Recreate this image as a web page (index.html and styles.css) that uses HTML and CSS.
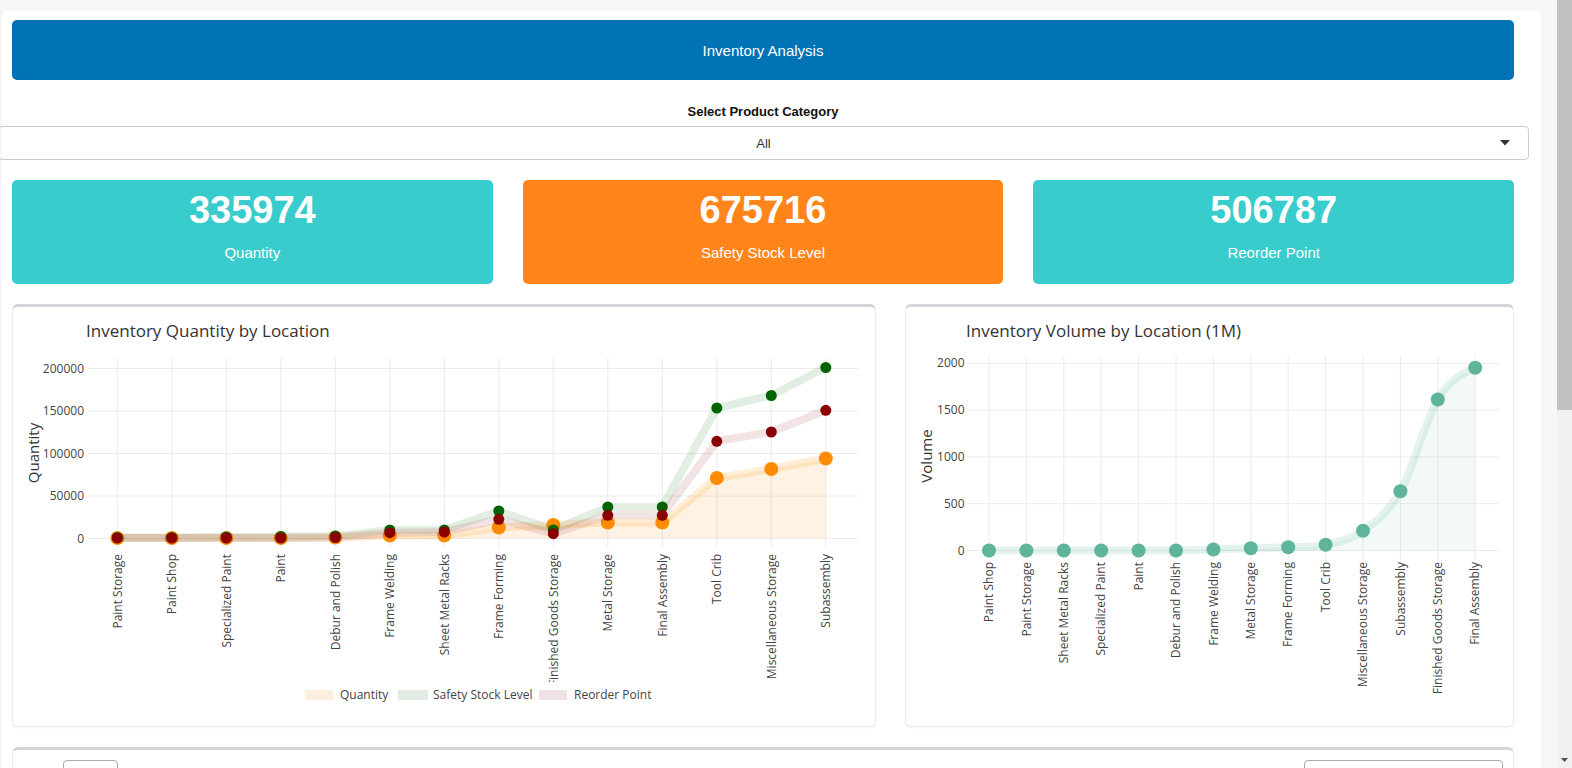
FILE: index.html
```html
<!DOCTYPE html>
<html lang="en">
<head>
<meta charset="utf-8">
<title>Inventory Analysis</title>
<link rel="stylesheet" href="styles.css">
</head>
<body>
<div class="viewport">
  <div class="page">
    <div class="app">
      <header class="banner">Inventory Analysis</header>

      <div class="filter">
        <div class="filter-label">Select Product Category</div>
        <div class="select">
          <span></span>
          <span class="select-value">All</span>
          <span class="caret"><svg width="10" height="6" viewBox="0 0 10 6"><path d="M0 0 H10 L5 5.5 Z" fill="#333"/></svg></span>
        </div>
      </div>

      <div class="kpis">
        <div class="kpi kpi-teal">
          <div class="kpi-value">335974</div>
          <div class="kpi-label">Quantity</div>
        </div>
        <div class="kpi kpi-orange">
          <div class="kpi-value">675716</div>
          <div class="kpi-label">Safety Stock Level</div>
        </div>
        <div class="kpi kpi-teal">
          <div class="kpi-value">506787</div>
          <div class="kpi-label">Reorder Point</div>
        </div>
      </div>

      <div class="charts">
        <div class="chart-card">
          <svg class="plot" width="862" height="419" viewBox="1 0 862 419">
            <text class="plot-title" x="74" y="30">Inventory Quantity by Location</text>
            <g class="grid">
              <line x1="76" x2="846" y1="231.5" y2="231.5"/>
              <line x1="76" x2="846" y1="189" y2="189"/>
              <line x1="76" x2="846" y1="146.5" y2="146.5"/>
              <line x1="76" x2="846" y1="104" y2="104"/>
              <line x1="76" x2="846" y1="61.5" y2="61.5"/>
              <line x1="105.3" x2="105.3" y1="51" y2="241"/>
              <line x1="159.8" x2="159.8" y1="51" y2="241"/>
              <line x1="214.3" x2="214.3" y1="51" y2="241"/>
              <line x1="268.8" x2="268.8" y1="51" y2="241"/>
              <line x1="323.3" x2="323.3" y1="51" y2="241"/>
              <line x1="377.8" x2="377.8" y1="51" y2="241"/>
              <line x1="432.3" x2="432.3" y1="51" y2="241"/>
              <line x1="486.8" x2="486.8" y1="51" y2="241"/>
              <line x1="541.3" x2="541.3" y1="51" y2="241"/>
              <line x1="595.8" x2="595.8" y1="51" y2="241"/>
              <line x1="650.3" x2="650.3" y1="51" y2="241"/>
              <line x1="704.8" x2="704.8" y1="51" y2="241"/>
              <line x1="759.3" x2="759.3" y1="51" y2="241"/>
              <line x1="813.8" x2="813.8" y1="51" y2="241"/>
            </g>
            <g class="ytick" text-anchor="end">
              <text x="72" y="235.5">0</text>
              <text x="72" y="193">50000</text>
              <text x="72" y="150.5">100000</text>
              <text x="72" y="108">150000</text>
              <text x="72" y="65.5">200000</text>
            </g>
            <text class="axis-title" transform="translate(22,146) rotate(-90)" text-anchor="middle" dy=".35em">Quantity</text>

            <polygon class="fill-orange" points="105.3,231 159.8,231 214.3,231 268.8,231 323.3,230.5 377.8,228.5 432.3,228.5 486.8,220.5 541.3,218 595.8,215.5 650.3,215.5 704.8,171 759.3,162 813.8,151.5 813.8,231.5 105.3,231.5"/>
            <polyline class="line-orange" points="105.3,231 159.8,231 214.3,231 268.8,231 323.3,230.5 377.8,228.5 432.3,228.5 486.8,220.5 541.3,218 595.8,215.5 650.3,215.5 704.8,171 759.3,162 813.8,151.5"/>
            <g class="dot-orange">
              <circle cx="105.3" cy="231" r="7"/><circle cx="159.8" cy="231" r="7"/><circle cx="214.3" cy="231" r="7"/><circle cx="268.8" cy="231" r="7"/><circle cx="323.3" cy="230.5" r="7"/><circle cx="377.8" cy="228.5" r="7"/><circle cx="432.3" cy="228.5" r="7"/><circle cx="486.8" cy="220.5" r="7"/><circle cx="541.3" cy="218" r="7"/><circle cx="595.8" cy="215.5" r="7"/><circle cx="650.3" cy="215.5" r="7"/><circle cx="704.8" cy="171" r="7"/><circle cx="759.3" cy="162" r="7"/><circle cx="813.8" cy="151.5" r="7"/>
            </g>
            <polyline class="line-green" points="105.3,230.5 159.8,230.5 214.3,230 268.8,229.5 323.3,229 377.8,223 432.3,223 486.8,204 541.3,223 595.8,200 650.3,200 704.8,101 759.3,88.5 813.8,60.5"/>
            <g class="dot-green">
              <circle cx="105.3" cy="230.5" r="5.5"/><circle cx="159.8" cy="230.5" r="5.5"/><circle cx="214.3" cy="230" r="5.5"/><circle cx="268.8" cy="229.5" r="5.5"/><circle cx="323.3" cy="229" r="5.5"/><circle cx="377.8" cy="223" r="5.5"/><circle cx="432.3" cy="223" r="5.5"/><circle cx="486.8" cy="204" r="5.5"/><circle cx="541.3" cy="223" r="5.5"/><circle cx="595.8" cy="200" r="5.5"/><circle cx="650.3" cy="200" r="5.5"/><circle cx="704.8" cy="101" r="5.5"/><circle cx="759.3" cy="88.5" r="5.5"/><circle cx="813.8" cy="60.5" r="5.5"/>
            </g>
            <polyline class="line-red" points="105.3,231 159.8,231 214.3,231 268.8,231 323.3,230.5 377.8,225.7 432.3,225 486.8,212.3 541.3,226.7 595.8,208.3 650.3,208.3 704.8,134.3 759.3,125 813.8,103.3"/>
            <g class="dot-red">
              <circle cx="105.3" cy="231" r="5.5"/><circle cx="159.8" cy="231" r="5.5"/><circle cx="214.3" cy="231" r="5.5"/><circle cx="268.8" cy="231" r="5.5"/><circle cx="323.3" cy="230.5" r="5.5"/><circle cx="377.8" cy="225.7" r="5.5"/><circle cx="432.3" cy="225" r="5.5"/><circle cx="486.8" cy="212.3" r="5.5"/><circle cx="541.3" cy="226.7" r="5.5"/><circle cx="595.8" cy="208.3" r="5.5"/><circle cx="650.3" cy="208.3" r="5.5"/><circle cx="704.8" cy="134.3" r="5.5"/><circle cx="759.3" cy="125" r="5.5"/><circle cx="813.8" cy="103.3" r="5.5"/>
            </g>

            <g class="xtick" text-anchor="end">
              <text transform="translate(105.3,247) rotate(-90)" dy=".35em">Paint Storage</text>
              <text transform="translate(159.8,247) rotate(-90)" dy=".35em">Paint Shop</text>
              <text transform="translate(214.3,247) rotate(-90)" dy=".35em">Specialized Paint</text>
              <text transform="translate(268.8,247) rotate(-90)" dy=".35em">Paint</text>
              <text transform="translate(323.3,247) rotate(-90)" dy=".35em">Debur and Polish</text>
              <text transform="translate(377.8,247) rotate(-90)" dy=".35em">Frame Welding</text>
              <text transform="translate(432.3,247) rotate(-90)" dy=".35em">Sheet Metal Racks</text>
              <text transform="translate(486.8,247) rotate(-90)" dy=".35em">Frame Forming</text>
              <text transform="translate(541.3,247) rotate(-90)" dy=".35em">Finished Goods Storage</text>
              <text transform="translate(595.8,247) rotate(-90)" dy=".35em">Metal Storage</text>
              <text transform="translate(650.3,247) rotate(-90)" dy=".35em">Final Assembly</text>
              <text transform="translate(704.8,247) rotate(-90)" dy=".35em">Tool Crib</text>
              <text transform="translate(759.3,247) rotate(-90)" dy=".35em">Miscellaneous Storage</text>
              <text transform="translate(813.8,247) rotate(-90)" dy=".35em">Subassembly</text>
            </g>

            <g class="legend">
              <rect x="288" y="375" width="355" height="26" fill="#fff"/>
              <rect class="sw-orange" x="293" y="383" width="28" height="10"/>
              <text x="328" y="388" dy=".35em">Quantity</text>
              <rect class="sw-green" x="386" y="383" width="30" height="10"/>
              <text x="421" y="388" dy=".35em">Safety Stock Level</text>
              <rect class="sw-red" x="527" y="383" width="28" height="10"/>
              <text x="562" y="388" dy=".35em">Reorder Point</text>
            </g>
          </svg>
        </div>

        <div class="chart-card">
          <svg class="plot" width="607" height="419" viewBox="1 0 607 419">
            <text class="plot-title" x="61" y="30">Inventory Volume by Location (1M)</text>
            <g class="grid">
              <line x1="62" x2="594" y1="243.5" y2="243.5"/>
              <line x1="62" x2="594" y1="196.7" y2="196.7"/>
              <line x1="62" x2="594" y1="149.9" y2="149.9"/>
              <line x1="62" x2="594" y1="103.1" y2="103.1"/>
              <line x1="62" x2="594" y1="56.3" y2="56.3"/>
              <line x1="84" x2="84" y1="49" y2="254"/>
              <line x1="121.4" x2="121.4" y1="49" y2="254"/>
              <line x1="158.8" x2="158.8" y1="49" y2="254"/>
              <line x1="196.2" x2="196.2" y1="49" y2="254"/>
              <line x1="233.6" x2="233.6" y1="49" y2="254"/>
              <line x1="271" x2="271" y1="49" y2="254"/>
              <line x1="308.4" x2="308.4" y1="49" y2="254"/>
              <line x1="345.8" x2="345.8" y1="49" y2="254"/>
              <line x1="383.2" x2="383.2" y1="49" y2="254"/>
              <line x1="420.6" x2="420.6" y1="49" y2="254"/>
              <line x1="458" x2="458" y1="49" y2="254"/>
              <line x1="495.4" x2="495.4" y1="49" y2="254"/>
              <line x1="532.8" x2="532.8" y1="49" y2="254"/>
              <line x1="570.2" x2="570.2" y1="49" y2="254"/>
            </g>
            <g class="ytick" text-anchor="end">
              <text x="59.5" y="247.5">0</text>
              <text x="59.5" y="200.7">500</text>
              <text x="59.5" y="153.9">1000</text>
              <text x="59.5" y="107.1">1500</text>
              <text x="59.5" y="60.3">2000</text>
            </g>
            <text class="axis-title" transform="translate(22,149) rotate(-90)" text-anchor="middle" dy=".35em">Volume</text>

            <path class="fill-teal" d="M84,243.5 L271,243.5 C283.47,243.33 295.93,242.88 308.4,242.5 C320.87,242.12 333.33,241.58 345.8,241.2 C358.27,240.82 370.73,240.77 383.2,240.2 C395.67,239.63 408.13,240.53 420.6,237.8 C433.07,235.07 445.53,232.73 458,223.8 C470.47,214.87 482.93,206.08 495.4,184.2 C507.87,162.32 520.33,113.07 532.8,92.5 C545.27,71.93 557.73,66.08 570.2,60.8 L570.2,243.5 Z"/>
            <path class="line-teal" d="M84,243.5 L271,243.5 C283.47,243.33 295.93,242.88 308.4,242.5 C320.87,242.12 333.33,241.58 345.8,241.2 C358.27,240.82 370.73,240.77 383.2,240.2 C395.67,239.63 408.13,240.53 420.6,237.8 C433.07,235.07 445.53,232.73 458,223.8 C470.47,214.87 482.93,206.08 495.4,184.2 C507.87,162.32 520.33,113.07 532.8,92.5 C545.27,71.93 557.73,66.08 570.2,60.8"/>
            <g class="dot-teal">
              <circle cx="84" cy="243.5" r="7"/><circle cx="121.4" cy="243.5" r="7"/><circle cx="158.8" cy="243.5" r="7"/><circle cx="196.2" cy="243.5" r="7"/><circle cx="233.6" cy="243.5" r="7"/><circle cx="271" cy="243.5" r="7"/><circle cx="308.4" cy="242.5" r="7"/><circle cx="345.8" cy="241.2" r="7"/><circle cx="383.2" cy="240.2" r="7"/><circle cx="420.6" cy="237.8" r="7"/><circle cx="458" cy="223.8" r="7"/><circle cx="495.4" cy="184.2" r="7"/><circle cx="532.8" cy="92.5" r="7"/><circle cx="570.2" cy="60.8" r="7"/>
            </g>

            <g class="xtick" text-anchor="end">
              <text transform="translate(84,255) rotate(-90)" dy=".35em">Paint Shop</text>
              <text transform="translate(121.4,255) rotate(-90)" dy=".35em">Paint Storage</text>
              <text transform="translate(158.8,255) rotate(-90)" dy=".35em">Sheet Metal Racks</text>
              <text transform="translate(196.2,255) rotate(-90)" dy=".35em">Specialized Paint</text>
              <text transform="translate(233.6,255) rotate(-90)" dy=".35em">Paint</text>
              <text transform="translate(271,255) rotate(-90)" dy=".35em">Debur and Polish</text>
              <text transform="translate(308.4,255) rotate(-90)" dy=".35em">Frame Welding</text>
              <text transform="translate(345.8,255) rotate(-90)" dy=".35em">Metal Storage</text>
              <text transform="translate(383.2,255) rotate(-90)" dy=".35em">Frame Forming</text>
              <text transform="translate(420.6,255) rotate(-90)" dy=".35em">Tool Crib</text>
              <text transform="translate(458,255) rotate(-90)" dy=".35em">Miscellaneous Storage</text>
              <text transform="translate(495.4,255) rotate(-90)" dy=".35em">Subassembly</text>
              <text transform="translate(532.8,255) rotate(-90)" dy=".35em">Finished Goods Storage</text>
              <text transform="translate(570.2,255) rotate(-90)" dy=".35em">Final Assembly</text>
            </g>
          </svg>
        </div>
      </div>

      <div class="table-card">
        <div class="length-box"></div>
        <div class="search-box"></div>
      </div>
    </div>
  </div>
  <div class="scrollbar">
    <div class="thumb"></div>
    <div class="track"></div>
    <div class="arrow"><svg width="7" height="4" viewBox="0 0 7 4"><path d="M0 0 H7 L3.5 4 Z" fill="#505050"/></svg></div>
  </div>
</div>
</body>
</html>
```

FILE: styles.css
```css
html, body {
  margin: 0;
  padding: 0;
  overflow: hidden;
}

body {
  font-family: "Liberation Sans", Arial, sans-serif;
  background: #f6f6f6;
  color: #333;
}

.viewport {
  display: flex;
  height: 768px;
  overflow: hidden;
}

.page {
  flex: 1;
  min-width: 0;
  background: #f6f6f6;
}

.app {
  margin: 10px 16px 0 2px;
  padding: 10px 27px 40px 10px;
  background: #fff;
  border-radius: 6px;
}

.banner {
  height: 60px;
  background: #0072b6;
  border-radius: 5px;
  color: #fff;
  font-size: 15px;
  display: flex;
  align-items: center;
  justify-content: center;
}

.filter-label {
  margin-top: 23px;
  text-align: center;
  font-weight: bold;
  font-size: 13px;
  line-height: 18px;
  color: #111;
}

.select {
  margin: 5px -15px 0 -14px;
  height: 34px;
  box-sizing: border-box;
  border: 1px solid #ccc;
  border-radius: 4px;
  display: grid;
  grid-template-columns: 46px 1fr 46px;
  align-items: center;
  font-size: 13px;
  color: #333;
}

.select-value {
  text-align: center;
}

.caret {
  display: flex;
  justify-content: center;
}

.caret svg {
  display: block;
}

.kpis {
  display: grid;
  grid-template-columns: repeat(3, 1fr);
  gap: 30px;
  margin-top: 20px;
}

.kpi {
  height: 104px;
  box-sizing: border-box;
  padding-top: 9px;
  border-radius: 5px;
  color: #fff;
  text-align: center;
}

.kpi-teal {
  background: #39cccc;
}

.kpi-orange {
  background: #ff851b;
}

.kpi-value {
  font-size: 38px;
  font-weight: bold;
  line-height: 42px;
}

.kpi-label {
  margin-top: 13px;
  font-size: 15px;
  line-height: 18px;
}

.charts {
  display: grid;
  grid-template-columns: 864px 609px;
  gap: 29px;
  margin-top: 20px;
}

.chart-card {
  height: 423px;
  box-sizing: border-box;
  background: #fff;
  border: 1px solid #ececec;
  border-top: 3px solid #d4d4da;
  border-radius: 6px;
  box-shadow: 0 1px 2px rgba(0, 0, 0, 0.05);
}

.plot {
  display: block;
  font-family: "Open Sans", "DejaVu Sans", sans-serif;
}

.plot-title {
  font-size: 17px;
  fill: #333;
}

.grid line {
  stroke: #ececec;
  stroke-width: 1;
}

.ytick text,
.xtick text {
  font-size: 12px;
  fill: #444;
}

.axis-title {
  font-size: 15px;
  fill: #333;
}

.fill-orange {
  fill: rgba(255, 140, 0, 0.11);
}

.line-orange {
  fill: none;
  stroke: rgba(255, 140, 0, 0.16);
  stroke-width: 8;
  stroke-linejoin: round;
}

.line-green {
  fill: none;
  stroke: rgba(0, 100, 0, 0.11);
  stroke-width: 8;
  stroke-linejoin: round;
}

.line-red {
  fill: none;
  stroke: rgba(139, 0, 20, 0.11);
  stroke-width: 8;
  stroke-linejoin: round;
}

.dot-orange circle {
  fill: #ff8c00;
}

.dot-green circle {
  fill: #006400;
}

.dot-red circle {
  fill: #8b0000;
}

.fill-teal {
  fill: rgba(95, 180, 156, 0.08);
}

.line-teal {
  fill: none;
  stroke: rgba(95, 180, 156, 0.16);
  stroke-width: 8;
}

.dot-teal circle {
  fill: #5fb49c;
}

.legend text {
  font-size: 12px;
  fill: #444;
}

.sw-orange {
  fill: #fdeedd;
}

.sw-green {
  fill: #e3ece3;
}

.sw-red {
  fill: #f0e2e4;
}

.table-card {
  margin-top: 20px;
  height: 200px;
  box-sizing: border-box;
  border: 1px solid #ececec;
  border-top: 3px solid #d4d4da;
  border-radius: 6px;
  padding: 10px 10px 0 50px;
  display: flex;
  justify-content: space-between;
  align-items: flex-start;
}

.length-box {
  width: 55px;
  height: 30px;
  box-sizing: border-box;
  border: 1px solid #aaa;
  border-radius: 4px;
}

.search-box {
  width: 199px;
  height: 30px;
  box-sizing: border-box;
  border: 1px solid #aaa;
  border-radius: 4px;
}

.scrollbar {
  width: 15px;
  flex: none;
  display: flex;
  flex-direction: column;
  background: #f1f1f1;
}

.thumb {
  height: 410px;
  background: #c1c1c1;
}

.track {
  flex: 1;
}

.arrow {
  height: 17px;
  display: flex;
  align-items: center;
  justify-content: center;
}

.arrow svg {
  display: block;
}
```
